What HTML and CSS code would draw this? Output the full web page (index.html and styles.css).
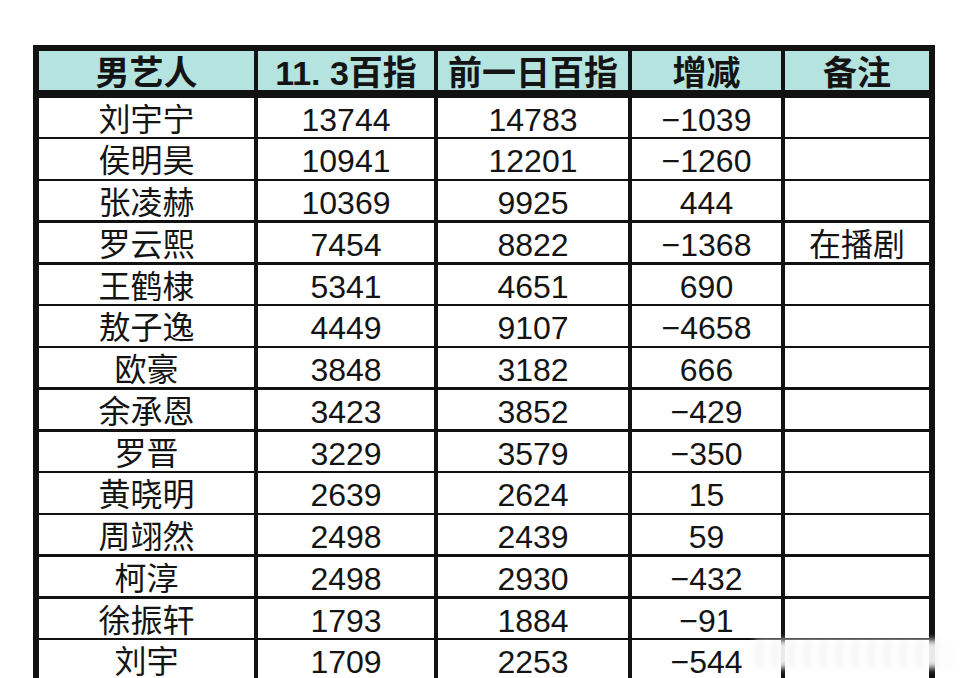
FILE: index.html
```html
<!DOCTYPE html>
<html lang="zh-CN">
<head>
<meta charset="utf-8">
<title>男艺人百指</title>
<link rel="stylesheet" href="styles.css">
</head>
<body>
<div class="page">
  <div class="sheet">
    <div class="hd">男艺人</div>
    <div class="hd">11. 3百指</div>
    <div class="hd">前一日百指</div>
    <div class="hd">增减</div>
    <div class="hd">备注</div>

    <div class="c">刘宇宁</div><div class="c">13744</div><div class="c">14783</div><div class="c">−1039</div><div class="c"></div>
    <div class="c">侯明昊</div><div class="c">10941</div><div class="c">12201</div><div class="c">−1260</div><div class="c"></div>
    <div class="c">张凌赫</div><div class="c">10369</div><div class="c">9925</div><div class="c">444</div><div class="c"></div>
    <div class="c">罗云熙</div><div class="c">7454</div><div class="c">8822</div><div class="c">−1368</div><div class="c">在播剧</div>
    <div class="c">王鹤棣</div><div class="c">5341</div><div class="c">4651</div><div class="c">690</div><div class="c"></div>
    <div class="c">敖子逸</div><div class="c">4449</div><div class="c">9107</div><div class="c">−4658</div><div class="c"></div>
    <div class="c">欧豪</div><div class="c">3848</div><div class="c">3182</div><div class="c">666</div><div class="c"></div>
    <div class="c">余承恩</div><div class="c">3423</div><div class="c">3852</div><div class="c">−429</div><div class="c"></div>
    <div class="c">罗晋</div><div class="c">3229</div><div class="c">3579</div><div class="c">−350</div><div class="c"></div>
    <div class="c">黄晓明</div><div class="c">2639</div><div class="c">2624</div><div class="c">15</div><div class="c"></div>
    <div class="c">周翊然</div><div class="c">2498</div><div class="c">2439</div><div class="c">59</div><div class="c"></div>
    <div class="c">柯淳</div><div class="c">2498</div><div class="c">2930</div><div class="c">−432</div><div class="c"></div>
    <div class="c">徐振轩</div><div class="c">1793</div><div class="c">1884</div><div class="c">−91</div><div class="c"></div>
    <div class="c">刘宇</div><div class="c">1709</div><div class="c">2253</div><div class="c">−544</div><div class="c"></div>
  </div>
  <div class="mark"></div>
</div>
</body>
</html>
```

FILE: styles.css
```css
html, body {
  margin: 0;
  padding: 0;
  background: #fff;
  overflow: hidden;
  height: 678px;
}

.page {
  position: relative;
  width: 960px;
  height: 678px;
  padding-top: 45px;
  box-sizing: border-box;
}

.sheet {
  display: grid;
  grid-template-columns: 215px 176px 190px 149px 144px;
  grid-template-rows: 44px;
  grid-auto-rows: 39.25px;
  column-gap: 4px;
  row-gap: 2.5px;
  width: fit-content;
  margin-left: 33px;
  background: #121212;
  border: 6px solid #121212;
  font-family: "Liberation Sans", "Noto Sans CJK SC", sans-serif;
  color: #141414;
}

.hd {
  background: #b5e4e0;
  border-bottom: 2.5px solid #121212;
  margin-bottom: -2.5px;
  display: flex;
  justify-content: center;
  align-items: center;
  font-size: 34px;
  font-weight: bold;
  line-height: 1;
  padding-top: 4px;
  box-sizing: content-box;
  height: 35px;
  white-space: nowrap;
}

.c {
  background: #fff;
  display: flex;
  justify-content: center;
  align-items: center;
  font-size: 32px;
  line-height: 1;
  padding-top: 5px;
  box-sizing: border-box;
  white-space: nowrap;
}

.mark {
  position: absolute;
  left: 755px;
  top: 640px;
  width: 195px;
  height: 28px;
  background:
    repeating-linear-gradient(90deg, rgba(215,215,215,0.25) 0 8px, rgba(255,255,255,0) 8px 16px),
    rgba(255,255,255,0.92);
  filter: blur(3px);
}
```
